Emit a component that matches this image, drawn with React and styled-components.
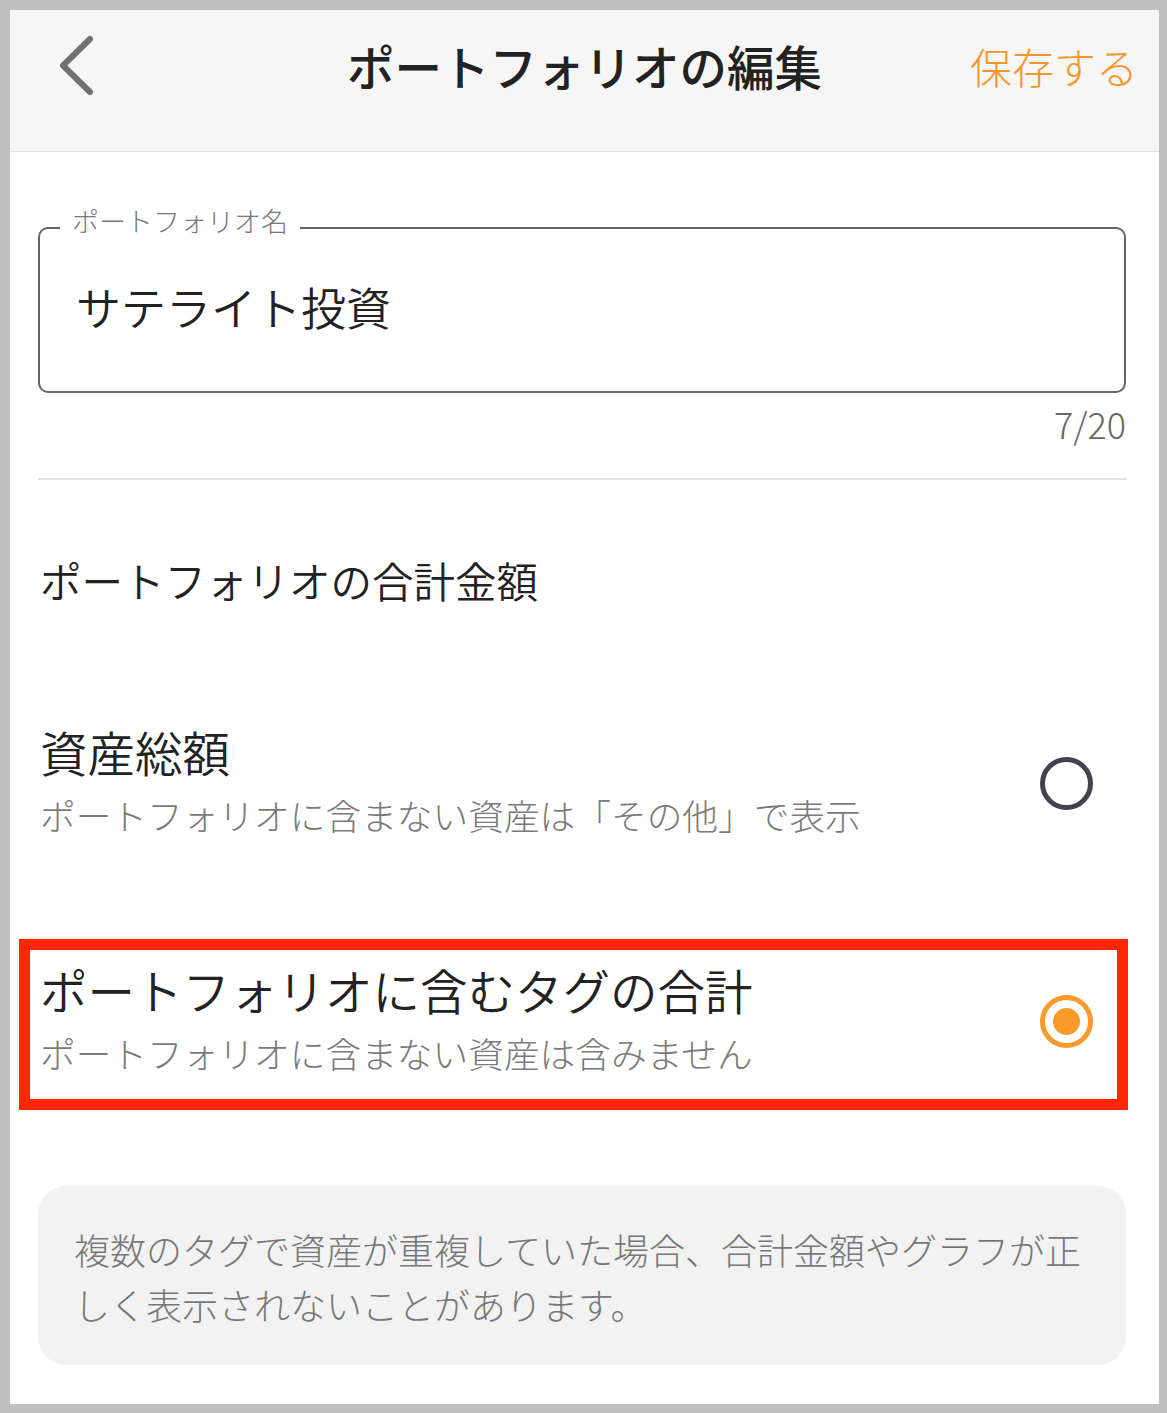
import React from "react";
import styled, { createGlobalStyle } from "styled-components";

const Global = createGlobalStyle`
  html, body { margin: 0; padding: 0; background: #c0c0c0; }
  body { font-family: "Noto Sans CJK JP", "Noto Sans", sans-serif; }
  #root { padding: 10px 8px 9px 10px; }
  * { box-sizing: border-box; }
`;

const Screen = styled.div`
  width: 1149px;
  height: 1394px;
  background: #ffffff;
  display: flex;
  flex-direction: column;
  overflow: hidden;
`;

const Header = styled.header`
  height: 142px;
  flex: none;
  background: #f6f6f6;
  border-bottom: 1px solid #e3e3e3;
  display: grid;
  grid-template-columns: 1fr auto 1fr;
  align-items: center;
  padding: 0 21px 29px 21px;
`;

const BackButton = styled.button`
  justify-self: start;
  margin-left: 23px;
  background: none;
  border: 0;
  padding: 0;
  display: flex;
  cursor: pointer;
`;

const Title = styled.h1`
  margin: 0;
  font-size: 47.5px;
  font-weight: 500;
  color: #222222;
  line-height: 60px;
  letter-spacing: 0;
`;

const SaveButton = styled.button`
  justify-self: end;
  background: none;
  border: 0;
  padding: 0;
  font-family: inherit;
  font-size: 42px;
  font-weight: 300;
  color: #f7952b;
  line-height: 60px;
  cursor: pointer;
`;

const Body = styled.main`
  flex: 1;
  display: flex;
  flex-direction: column;
  padding: 0 33px 0 28px;
`;

const Field = styled.fieldset`
  margin: 54px 0 0;
  padding: 0 36px 26px;
  border: 2px solid #656565;
  border-radius: 10px;
`;

const Legend = styled.legend`
  margin-left: -16px;
  padding: 0 12px 13px;
  font-size: 27px;
  line-height: 30px;
  font-weight: 300;
  color: #777777;
`;

const FieldValue = styled.div`
  height: 116px;
  line-height: 116px;
  font-size: 45px;
  font-weight: 350;
  color: #222222;
`;

const Counter = styled.div`
  margin-top: 10px;
  align-self: flex-end;
  font-size: 36px;
  line-height: 40px;
  font-weight: 300;
  color: #666666;
`;

const Divider = styled.hr`
  margin: 35px 0 0;
  border: 0;
  height: 2px;
  background: #e2e2e2;
`;

const SectionTitle = styled.h2`
  margin: 70px 0 0 2px;
  font-size: 41.5px;
  line-height: 60px;
  font-weight: 350;
  color: #222222;
`;

const OptionList = styled.div`
  margin-top: 110px;
  display: flex;
  flex-direction: column;
  gap: 112px;
`;

const Option = styled.label`
  position: relative;
  display: flex;
  align-items: center;
  justify-content: space-between;
  padding-left: 2px;
  cursor: pointer;

  ${(p) =>
    p.$highlighted &&
    `
    &::after {
      content: "";
      position: absolute;
      left: -19px;
      right: -2px;
      top: -19px;
      bottom: -26px;
      border: 11px solid #ff2600;
      pointer-events: none;
    }
  `}
`;

const OptionText = styled.div`
  display: flex;
  flex-direction: column;
`;

const OptionTitle = styled.div`
  font-size: 47.5px;
  line-height: 64px;
  font-weight: 350;
  color: #222222;
`;

const OptionSub = styled.div`
  font-size: 35.7px;
  line-height: 62px;
  font-weight: 300;
  color: #7a7a7a;
`;

const Radio = styled.span`
  flex: none;
  width: 53px;
  height: 53px;
  margin-right: 33px;
  border-radius: 50%;
  border: ${(p) => (p.$checked ? "5px solid #fa9a2a" : "5.5px solid #44434d")};
  display: flex;
  align-items: center;
  justify-content: center;

  &::before {
    content: "";
    width: 27px;
    height: 27px;
    border-radius: 50%;
    background: #fa9a2a;
    display: ${(p) => (p.$checked ? "block" : "none")};
  }
`;

const Note = styled.div`
  margin-top: 102px;
  background: #f2f2f2;
  border-radius: 28px;
  padding: 36px 36px 33px;
  font-size: 36px;
  line-height: 55px;
  font-weight: 300;
  color: #777777;
`;

const Chevron = () => (
  <svg width="40" height="62" viewBox="0 0 40 62" fill="none">
    <path
      d="M36 4 L9 30.5 L36 57"
      stroke="#707070"
      strokeWidth="6"
      strokeLinecap="round"
      strokeLinejoin="round"
    />
  </svg>
);

const options = [
  {
    id: "total",
    title: "資産総額",
    sub: "ポートフォリオに含まない資産は「その他」で表示",
    checked: false,
  },
  {
    id: "tags",
    title: "ポートフォリオに含むタグの合計",
    sub: "ポートフォリオに含まない資産は含みません",
    checked: true,
  },
];

export default function App() {
  return (
    <>
      <Global />
      <Screen>
        <Header>
          <BackButton aria-label="戻る">
            <Chevron />
          </BackButton>
          <Title>ポートフォリオの編集</Title>
          <SaveButton>保存する</SaveButton>
        </Header>
        <Body>
          <Field>
            <Legend>ポートフォリオ名</Legend>
            <FieldValue>サテライト投資</FieldValue>
          </Field>
          <Counter>7/20</Counter>
          <Divider />
          <SectionTitle>ポートフォリオの合計金額</SectionTitle>
          <OptionList>
            {options.map((o) => (
              <Option key={o.id} $highlighted={o.checked}>
                <OptionText>
                  <OptionTitle>{o.title}</OptionTitle>
                  <OptionSub>{o.sub}</OptionSub>
                </OptionText>
                <Radio $checked={o.checked} />
              </Option>
            ))}
          </OptionList>
          <Note>
            複数のタグで資産が重複していた場合、合計金額やグラフが正しく表示されないことがあります。
          </Note>
        </Body>
      </Screen>
    </>
  );
}
